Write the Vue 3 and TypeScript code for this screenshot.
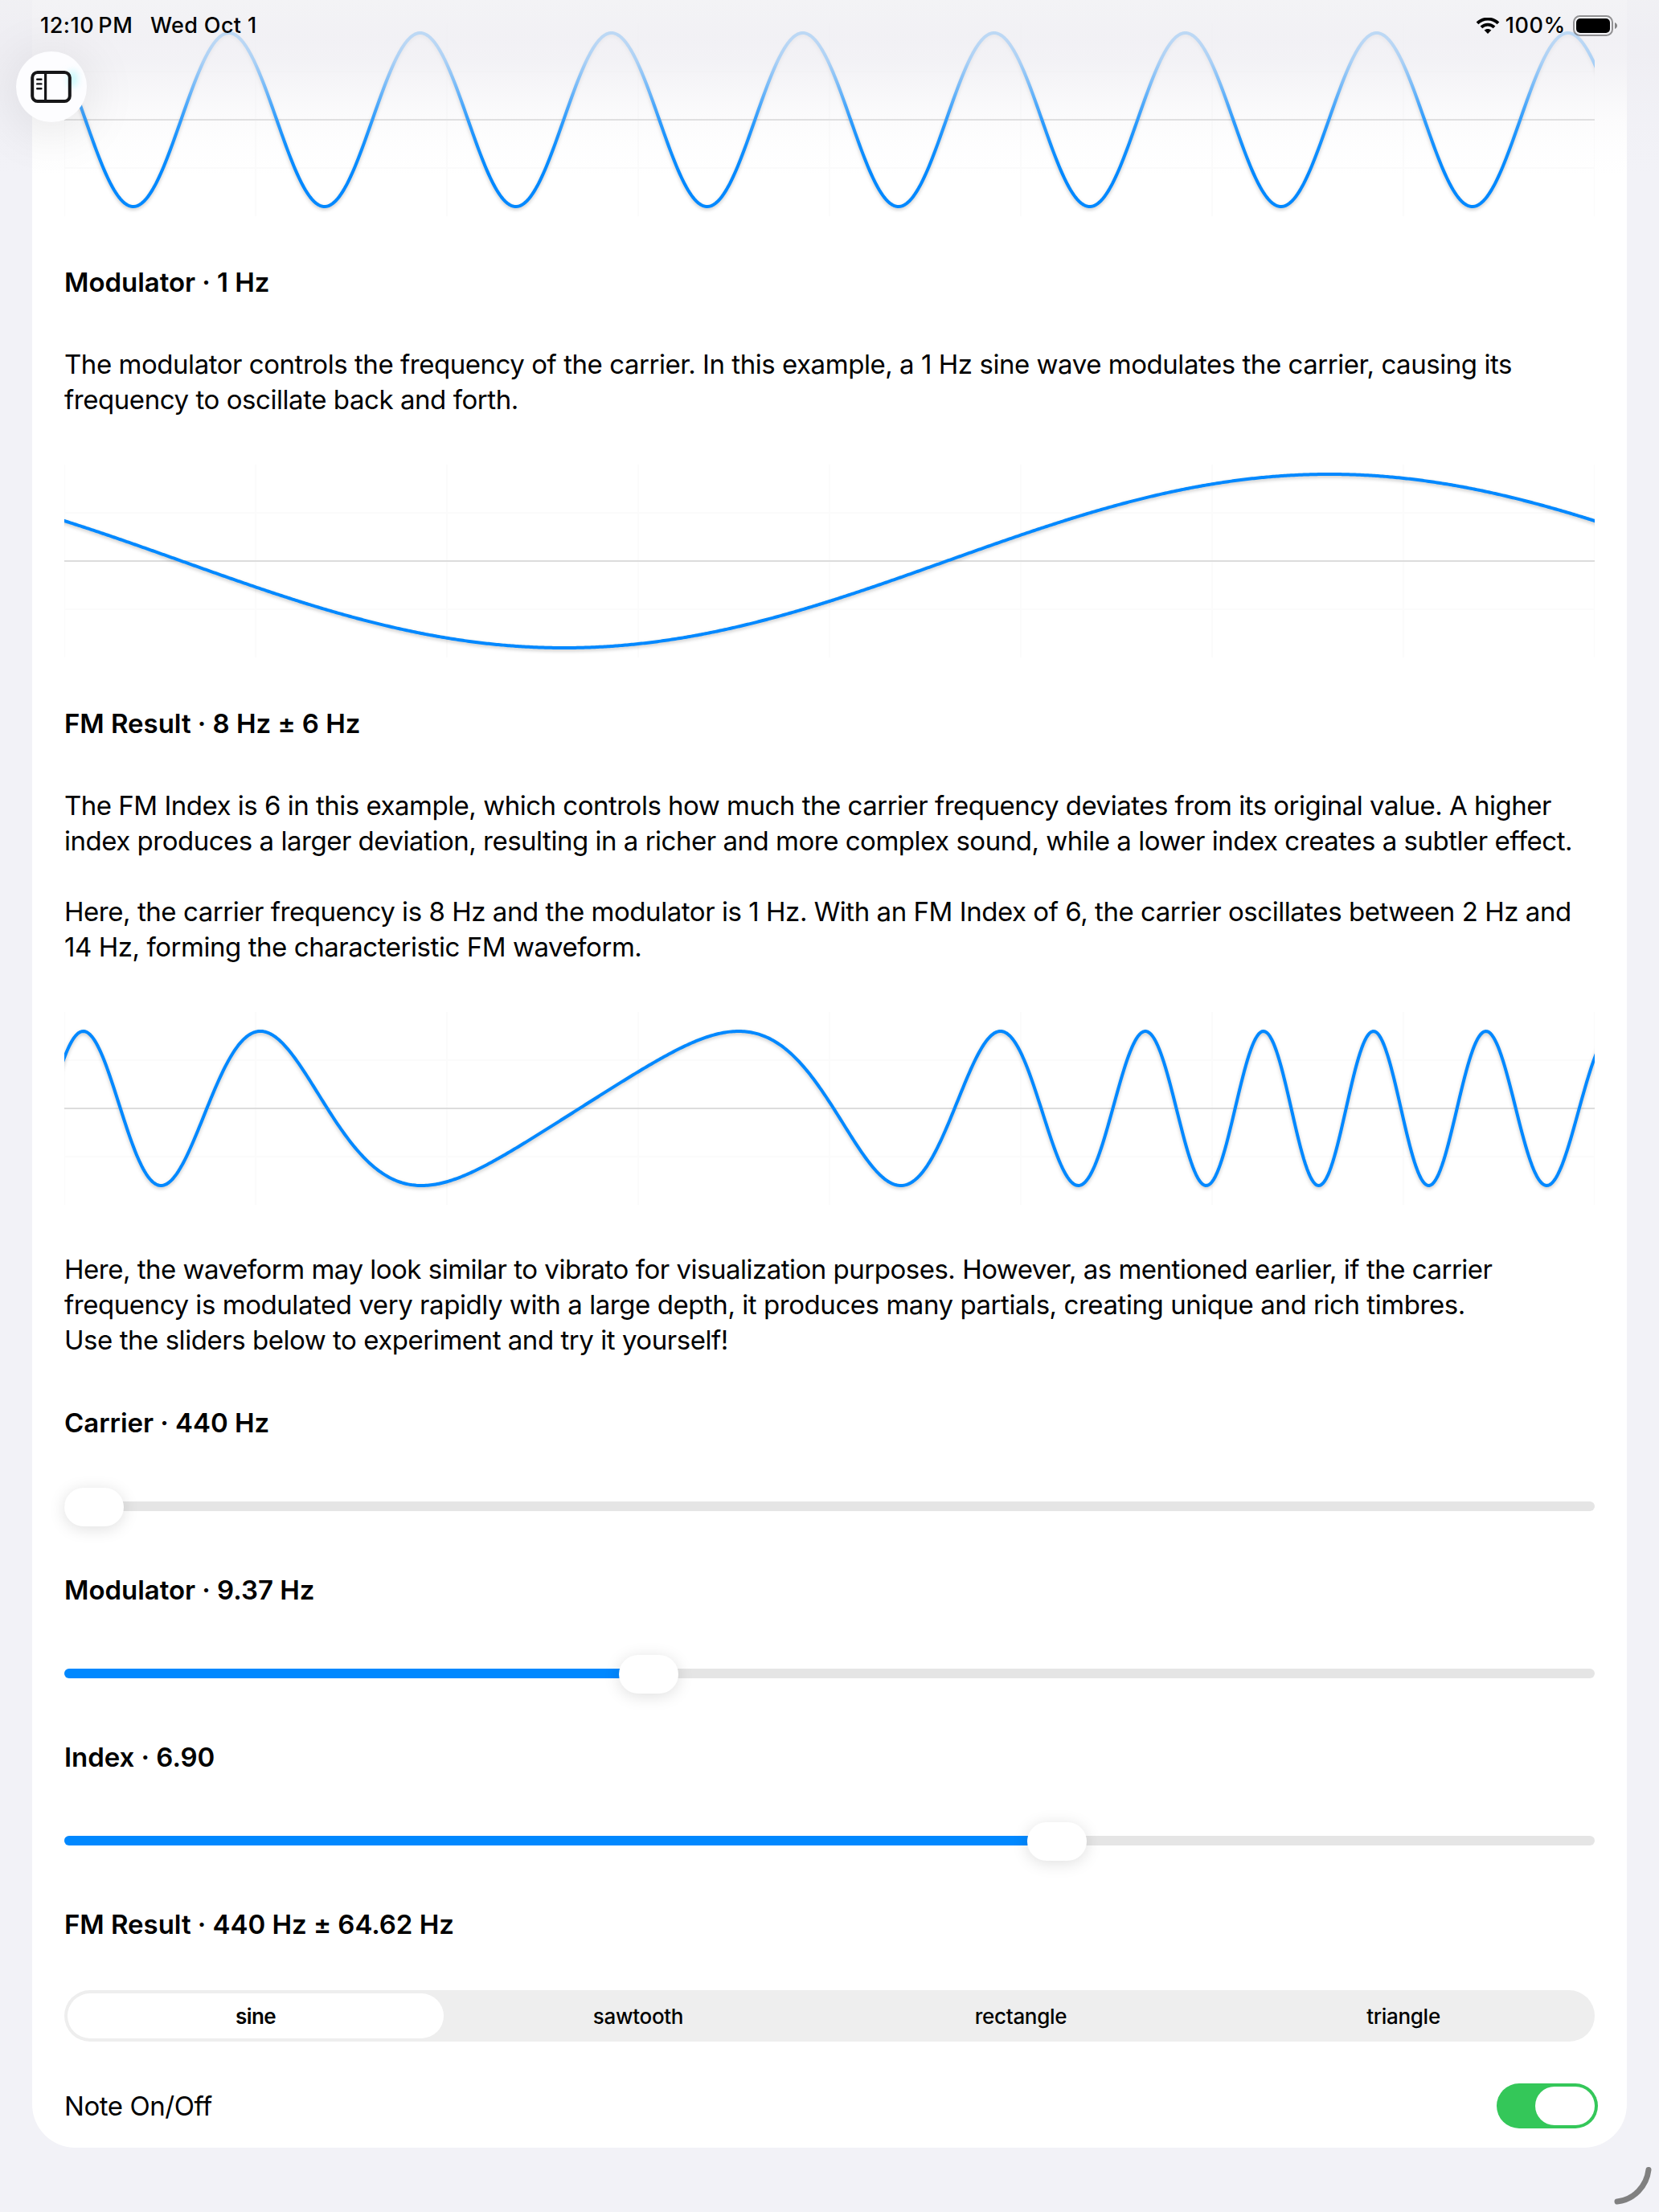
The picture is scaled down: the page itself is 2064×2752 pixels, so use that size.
<script setup lang="ts">
interface Line { text: string; tracking: number }
interface Slider { label: string; position: number }

const CHART_W = 1904
const CHART_H = 240
const TAU = Math.PI * 2

function plot(amplitude: number, wave: (u: number) => number): string {
  const points: string[] = []
  for (let x = -8; x <= CHART_W + 8; x += 2) {
    const y = CHART_H / 2 - amplitude * CHART_H * wave(x / CHART_W)
    points.push(`${x},${y.toFixed(2)}`)
  }
  return points.join(' ')
}

const carrierWave = plot(0.45, (u) => Math.cos(TAU * (8 * u + 0.1397)))
const modulatorWave = plot(0.45, (u) => Math.cos(TAU * (u + 0.1734)))
const fmWave = plot(0.4, (u) => Math.cos(TAU * (8 * u + 0.955 * Math.sin(TAU * (u + 0.1623)) + 0.0505)))

const columns = Array.from({ length: 9 }, (_, i) => (i * CHART_W) / 8)
const rows = [CHART_H / 4, (CHART_H * 3) / 4]

const modulatorText: Line[] = [
  { text: 'The modulator controls the frequency of the carrier. In this example, a 1 Hz sine wave modulates the carrier, causing its', tracking: -0.457 },
  { text: 'frequency to oscillate back and forth.', tracking: -0.44 },
]
const resultText: Line[] = [
  { text: 'The FM Index is 6 in this example, which controls how much the carrier frequency deviates from its original value. A higher', tracking: -0.5 },
  { text: 'index produces a larger deviation, resulting in a richer and more complex sound, while a lower index creates a subtler effect.', tracking: -0.485 },
  { text: '', tracking: 0 },
  { text: 'Here, the carrier frequency is 8 Hz and the modulator is 1 Hz. With an FM Index of 6, the carrier oscillates between 2 Hz and', tracking: -0.455 },
  { text: '14 Hz, forming the characteristic FM waveform.', tracking: -0.45 },
]
const closingText: Line[] = [
  { text: 'Here, the waveform may look similar to vibrato for visualization purposes. However, as mentioned earlier, if the carrier', tracking: -0.495 },
  { text: 'frequency is modulated very rapidly with a large depth, it produces many partials, creating unique and rich timbres.', tracking: -0.445 },
  { text: 'Use the sliders below to experiment and try it yourself!', tracking: -0.46 },
]

const sliders: Slider[] = [
  { label: 'Carrier · 440 Hz', position: 0 },
  { label: 'Modulator · 9.37 Hz', position: 0.377 },
  { label: 'Index · 6.90', position: 0.6547 },
]
const shapes = ['sine', 'sawtooth', 'rectangle', 'triangle']
const selected = 'sine'
</script>

<template>
  <div class="screen">
    <main class="card">
      <svg class="chart" viewBox="0 0 1904 240">
        <line v-for="c in columns" :key="c" class="grid" :x1="c" :x2="c" y1="0" y2="240" />
        <line v-for="r in rows" :key="r" class="grid" x1="0" x2="1904" :y1="r" :y2="r" />
        <line class="axis" x1="0" x2="1904" y1="120" y2="120" />
        <polyline class="wave" :points="carrierWave" />
      </svg>

      <h2 class="heading">Modulator · 1 Hz</h2>
      <div class="copy">
        <p v-for="l in modulatorText" :key="l.text" class="line" :style="{ letterSpacing: l.tracking + 'px' }">{{ l.text }}</p>
      </div>
      <svg class="chart" viewBox="0 0 1904 240">
        <line v-for="c in columns" :key="c" class="grid" :x1="c" :x2="c" y1="0" y2="240" />
        <line v-for="r in rows" :key="r" class="grid" x1="0" x2="1904" :y1="r" :y2="r" />
        <line class="axis" x1="0" x2="1904" y1="120" y2="120" />
        <polyline class="wave" :points="modulatorWave" />
      </svg>

      <h2 class="heading">FM Result · 8 Hz ± 6 Hz</h2>
      <div class="copy">
        <p v-for="l in resultText" :key="l.text" class="line" :style="{ letterSpacing: l.tracking + 'px' }">{{ l.text }}</p>
      </div>
      <svg class="chart chart-last" viewBox="0 0 1904 240">
        <line v-for="c in columns" :key="c" class="grid" :x1="c" :x2="c" y1="0" y2="240" />
        <line v-for="r in rows" :key="r" class="grid" x1="0" x2="1904" :y1="r" :y2="r" />
        <line class="axis" x1="0" x2="1904" y1="120" y2="120" />
        <polyline class="wave" :points="fmWave" />
      </svg>

      <div class="copy">
        <p v-for="l in closingText" :key="l.text" class="line" :style="{ letterSpacing: l.tracking + 'px' }">{{ l.text }}</p>
      </div>

      <section v-for="s in sliders" :key="s.label" class="control">
        <h2 class="label">{{ s.label }}</h2>
        <div class="slider">
          <div class="track">
            <div v-if="s.position > 0" class="fill" :style="{ width: s.position * 1830 + 37 + 'px' }"></div>
          </div>
          <div class="thumb" :style="{ left: s.position * 1830 + 'px' }"></div>
        </div>
      </section>

      <h2 class="label result-label">FM Result · 440 Hz ± 64.62 Hz</h2>
      <div class="segments">
        <div v-for="s in shapes" :key="s" class="segment" :class="{ active: s === selected }">
          <span>{{ s }}</span>
        </div>
      </div>

      <div class="note">
        <span class="line note-label">Note On/Off</span>
        <div class="toggle"><div class="knob"></div></div>
      </div>
    </main>

    <div class="fade"></div>

    <button class="sidebar" aria-label="Toggle sidebar">
      <i class="tint"></i>
      <svg viewBox="0 0 52 40" width="52" height="40" fill="none" stroke="#161618">
        <rect x="2.2" y="2" width="46.6" height="36" rx="6.6" stroke-width="4" />
        <path d="M18.6 2V38" stroke-width="3.2" />
        <path d="M8.2 10.7h5.2M8.2 16.4h5.2M8.2 22.2h5.2" stroke-width="2.4" stroke-linecap="round" />
      </svg>
    </button>

    <header class="status">
      <span class="time">12:10&#8239;PM</span>
      <span class="date">Wed Oct 1</span>
      <svg class="wifi" viewBox="0 0 30 20" width="30" height="20">
        <path d="M2 6.9C9.3-.2 20.7-.2 28 6.9" fill="none" stroke="#000" stroke-width="3.9" />
        <path d="M6.9 11.9C11.5 7.5 18.5 7.5 23.1 11.9" fill="none" stroke="#000" stroke-width="3.8" />
        <path d="M15 20l-4.4-4.4c2.5-2.3 6.3-2.3 8.8 0z" fill="#000" />
      </svg>
      <span class="percent">100%</span>
      <svg class="battery" viewBox="0 0 56 26" width="56" height="26">
        <rect x="1" y="1" width="48" height="24" rx="7.5" fill="none" stroke="#000" stroke-opacity=".4" stroke-width="2" />
        <rect x="4" y="4" width="42" height="18" rx="5" fill="#000" />
        <path d="M52 9c4 1.5 4 6.5 0 8z" fill="#000" fill-opacity=".45" />
      </svg>
    </header>

    <svg class="corner" viewBox="0 0 48 48" width="48" height="48">
      <path d="M43 4.5C40.5 25 25 41.5 4 44" fill="none" stroke="#808080" stroke-width="7" stroke-linecap="round" />
    </svg>
  </div>
</template>

<style>
body {
  background: #f2f2f7;
}
</style>

<style scoped>
.screen {
  position: relative;
  box-sizing: border-box;
  width: 2064px;
  height: 2752px;
  padding: 0 40px;
  overflow: hidden;
  background: #f2f2f7;
  color: #000;
  font-family: Inter, "Liberation Sans", sans-serif;
}
.card {
  box-sizing: border-box;
  height: 2672px;
  padding: 29px 40px 24px;
  background: #fff;
  border-radius: 0 0 54px 54px;
}
.chart {
  display: block;
  width: 1904px;
  height: 240px;
  margin-bottom: 60px;
  overflow: hidden;
}
.chart-last {
  margin-bottom: 58px;
}
.grid {
  stroke: #fbfbfb;
  stroke-width: 2;
}
.axis {
  stroke: #dcdcdc;
  stroke-width: 2;
}
.wave {
  fill: none;
  stroke: #0088ff;
  stroke-width: 4;
  stroke-linejoin: round;
  filter: drop-shadow(0 2px 2px rgba(0, 0, 0, 0.22));
}
.heading,
.label {
  margin: 0;
  font-size: 33px;
  font-weight: 600;
  line-height: 44px;
  letter-spacing: -0.04px;
}
.heading {
  margin-bottom: 58px;
}
.label {
  margin-bottom: 59px;
}
.result-label {
  margin-bottom: 60px;
}
.copy {
  margin-bottom: 59px;
}
.line {
  margin: 0;
  height: 44px;
  font-size: 33px;
  line-height: 44px;
  white-space: nowrap;
}
.control {
  margin-bottom: 57px;
}
.slider {
  position: relative;
  height: 48px;
  padding-top: 17px;
  box-sizing: border-box;
}
.track {
  height: 12px;
  border-radius: 6px;
  background: #e5e5e5;
  overflow: hidden;
}
.fill {
  height: 12px;
  background: #0088ff;
}
.thumb {
  position: absolute;
  top: 0;
  width: 74px;
  height: 48px;
  border-radius: 24px;
  background: #fff;
  box-shadow: 0 3px 20px rgba(0, 0, 0, 0.13);
}
.segments {
  display: flex;
  box-sizing: border-box;
  height: 64px;
  margin-bottom: 52px;
  padding: 4px 0;
  border-radius: 32px;
  background: #eeeeee;
}
.segment {
  display: flex;
  flex: 0 0 476px;
  align-items: center;
  justify-content: center;
  border-radius: 28px;
  font-size: 26px;
  font-weight: 500;
  letter-spacing: -0.3px;
}
.segment.active {
  flex-basis: 468px;
  margin: 0 4px;
  background: #fff;
  font-weight: 600;
  letter-spacing: -0.6px;
}
.note {
  display: flex;
  align-items: center;
  justify-content: space-between;
  height: 56px;
  margin-right: -4px;
}
.note-label {
  letter-spacing: -0.45px;
}
.toggle {
  display: flex;
  justify-content: flex-end;
  box-sizing: border-box;
  width: 126px;
  height: 56px;
  padding: 4px;
  border-radius: 28px;
  background: #34c759;
}
.knob {
  width: 74px;
  height: 48px;
  border-radius: 24px;
  background: #fff;
}
.fade {
  position: absolute;
  inset: 0 0 auto;
  height: 220px;
  background: linear-gradient(
    rgba(240, 240, 243, 0.8) 0,
    rgba(238, 237, 242, 0.79) 50px,
    rgba(238, 237, 242, 0.72) 75px,
    rgba(238, 237, 242, 0.52) 105px,
    rgba(238, 237, 242, 0.33) 130px,
    rgba(238, 237, 242, 0.2) 150px,
    rgba(238, 237, 242, 0.08) 180px,
    rgba(238, 237, 242, 0) 220px
  );
}
.sidebar {
  position: absolute;
  left: 20px;
  top: 64px;
  display: flex;
  box-sizing: border-box;
  width: 88px;
  height: 88px;
  padding: 24px 0 0 18px;
  border: 0;
  border-radius: 50%;
  background: #fdfdff;
  box-shadow: 0 8px 70px rgba(0, 0, 0, 0.11);
}
.sidebar svg {
  position: relative;
  flex: none;
}
.tint {
  position: absolute;
  left: 65px;
  top: 24px;
  width: 11px;
  height: 20px;
  border-radius: 6px;
  background: #c4f8fb;
  filter: blur(4px);
}
.status {
  position: absolute;
  inset: 10px 0 auto;
  display: flex;
  align-items: center;
  height: 44px;
  padding: 0 51px 0 50px;
  font-size: 27px;
  font-weight: 500;
  line-height: 46px;
}
.time {
  width: 137px;
  letter-spacing: 0.5px;
}
.date {
  letter-spacing: 0.35px;
}
.wifi {
  margin-left: auto;
}
.percent {
  margin: 0 9px 0 7px;
  letter-spacing: 0.6px;
}
.corner {
  position: absolute;
  left: 2008px;
  top: 2695px;
}
</style>
